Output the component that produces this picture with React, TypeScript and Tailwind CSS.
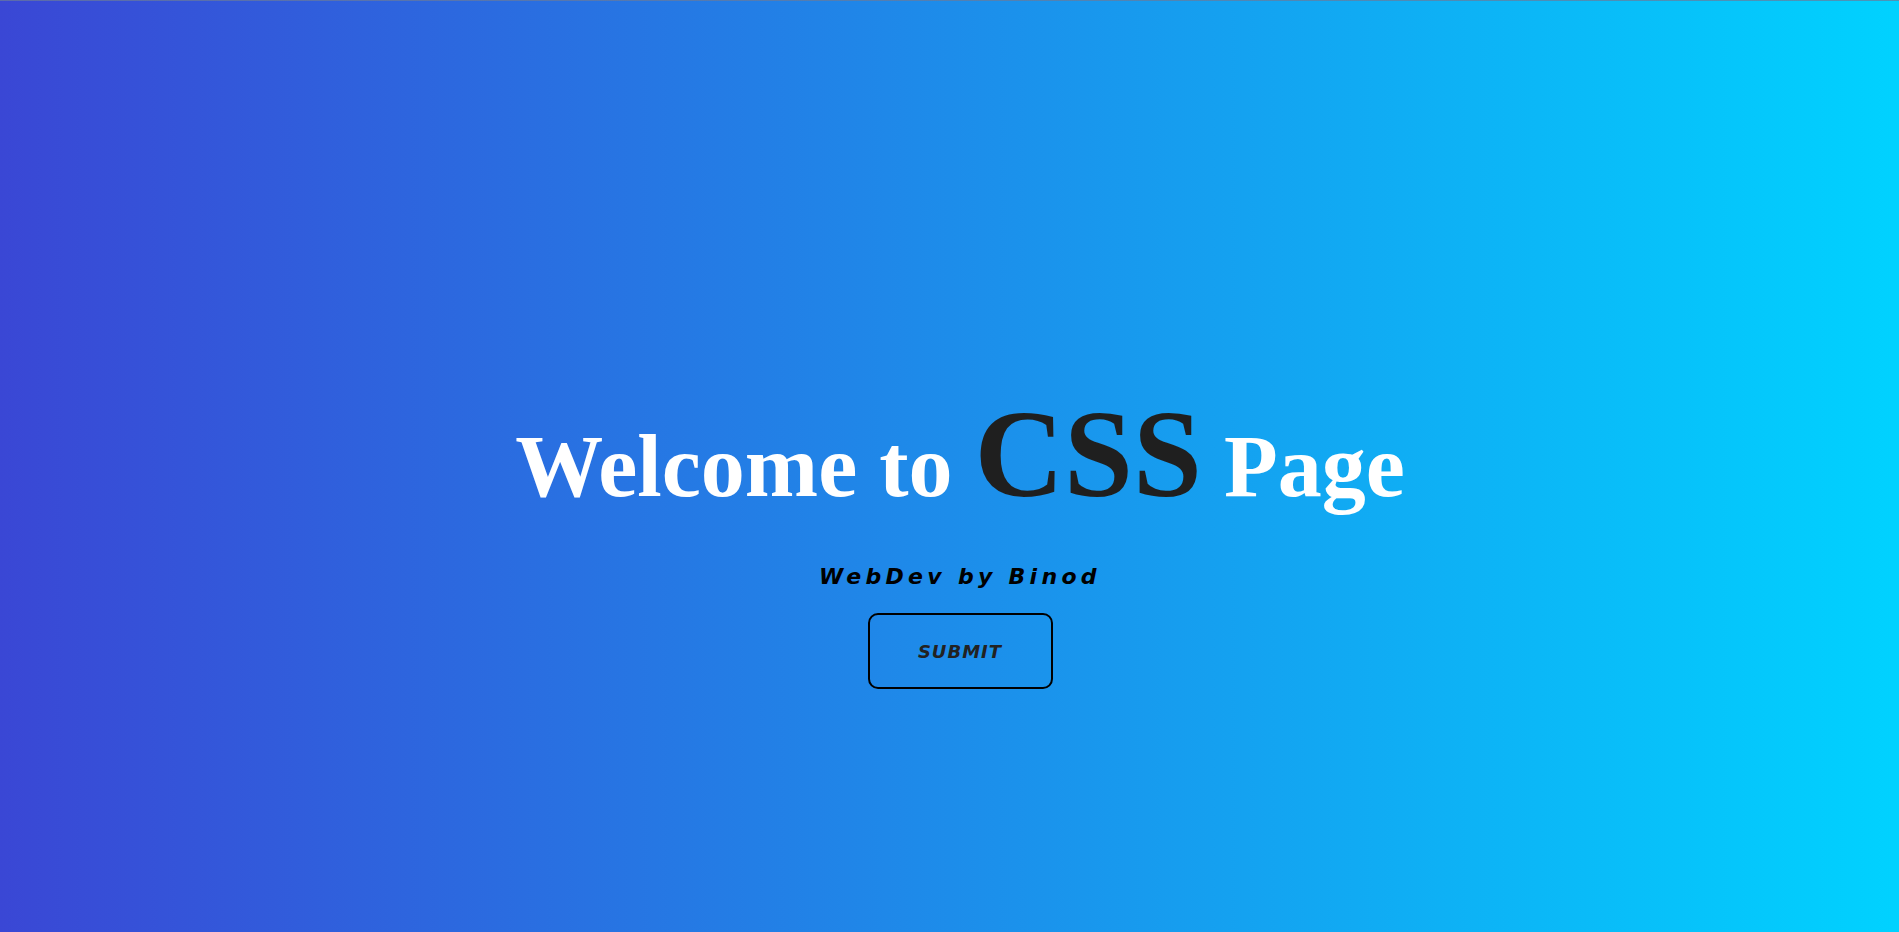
export default function App() {
  return (
    <div className="flex h-[932px] w-full flex-col items-center border-t border-[#6b7a99]/70 bg-[linear-gradient(to_right,#3a47d5,#00d2ff)] pl-[21px] pt-[392px]">
      <h1 className="font-['Liberation_Serif',serif] text-[88px] font-bold leading-none text-white">
        Welcome to <span className="text-[124px] leading-none text-[#1f1f1f]">CSS</span> Page
      </h1>
      <p className="mt-[49px] font-['DejaVu_Sans',sans-serif] text-[22px] font-bold italic leading-none tracking-[4.3px] text-black">
        WebDev by Binod
      </p>
      <button
        type="button"
        className="mt-[25px] h-[76px] w-[185px] rounded-[10px] border-2 border-black font-['DejaVu_Sans',sans-serif] text-[18px] font-bold italic tracking-[1px] text-[#222]"
      >
        SUBMIT
      </button>
    </div>
  );
}
